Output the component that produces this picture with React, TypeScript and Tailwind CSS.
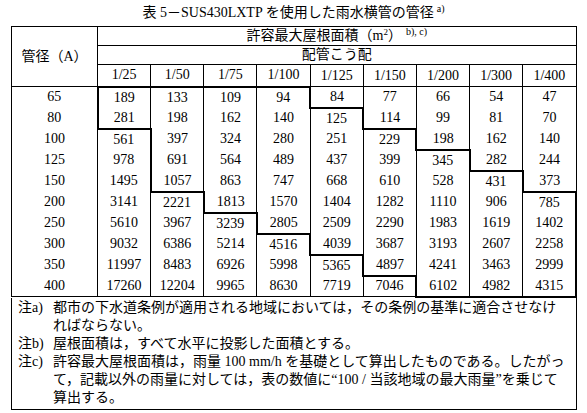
import React from "react";

const SLOPES = ["1/25", "1/50", "1/75", "1/100", "1/125", "1/150", "1/200", "1/300", "1/400"];

const ROWS: [number, number[]][] = [
  [65, [189, 133, 109, 94, 84, 77, 66, 54, 47]],
  [80, [281, 198, 162, 140, 125, 114, 99, 81, 70]],
  [100, [561, 397, 324, 280, 251, 229, 198, 162, 140]],
  [125, [978, 691, 564, 489, 437, 399, 345, 282, 244]],
  [150, [1495, 1057, 863, 747, 668, 610, 528, 431, 373]],
  [200, [3141, 2221, 1813, 1570, 1404, 1282, 1110, 906, 785]],
  [250, [5610, 3967, 3239, 2805, 2509, 2290, 1983, 1619, 1402]],
  [300, [9032, 6386, 5214, 4516, 4039, 3687, 3193, 2607, 2258]],
  [350, [11997, 8483, 6926, 5998, 5365, 4897, 4241, 3463, 2999]],
  [400, [17260, 12204, 9965, 8630, 7719, 7046, 6102, 4982, 4315]],
];

// columns enclosed by the thick stepped frame, per row
const BAND: [number, number][] = [
  [0, 3], [0, 4], [1, 5], [1, 6], [1, 7],
  [2, 8], [3, 8], [4, 8], [5, 8], [6, 8],
];

function inBand(r: number, c: number) {
  if (r < 0 || r >= BAND.length || c < 0 || c > 8) return false;
  return c >= BAND[r][0] && c <= BAND[r][1];
}

function cellClass(r: number, c: number) {
  const here = inBand(r, c);
  const top = here !== inBand(r - 1, c);
  const bottom = here !== inBand(r + 1, c);
  const left = here !== inBand(r, c - 1);
  const right = here !== inBand(r, c + 1);
  return [
    "border-black p-0 text-center",
    top ? "border-t-2" : "border-t-0",
    bottom ? "border-b-2" : r === ROWS.length - 1 ? "border-b" : "border-b-0",
    left ? "border-l-2" : "border-l",
    right ? "border-r-2" : "border-r",
  ].join(" ");
}

function Note({ label, lines }: { label: string; lines: string[] }) {
  return (
    <div className="flex">
      <span className="w-[35px] shrink-0">{label}</span>
      <div>
        {lines.map((l, i) => (
          <div key={i} className="whitespace-nowrap">
            {l}
          </div>
        ))}
      </div>
    </div>
  );
}

export default function App() {
  return (
    <div className="h-[413px] w-[587px] overflow-hidden bg-white font-[family-name:'Liberation_Serif','Noto_Sans_CJK_JP',serif] text-black">
      <div className="h-[26px] text-center text-[14px] leading-[26px]">
        表 5－SUS430LXTP を使用した雨水横管の管径
        <span className="relative -top-[5px] ml-[3px] text-[10px]">a)</span>
      </div>

      <table className="ml-[11px] w-[566px] table-fixed border-collapse">
        <colgroup>
          <col className="w-[86px]" />
          {SLOPES.map((s) => (
            <col key={s} />
          ))}
        </colgroup>
        <thead>
          <tr className="h-[19px]">
            <th rowSpan={3} className="border border-black p-0 text-[14px] font-normal">
              管径（A）
            </th>
            <th colSpan={9} className="border border-black p-0 text-[14px] font-normal leading-none">
              許容最大屋根面積（m<span className="relative -top-[5px] text-[9px]">2</span>）
              <span className="relative -top-[5px] ml-[4px] text-[10px]">b), c)</span>
            </th>
          </tr>
          <tr className="h-[19px]">
            <th colSpan={9} className="border border-black p-0 text-[14px] font-normal leading-none">
              配管こう配
            </th>
          </tr>
          <tr className="h-[22px]">
            {SLOPES.map((s) => (
              <th key={s} className="border border-black p-0 text-[14px] font-normal leading-none">
                {s}
              </th>
            ))}
          </tr>
        </thead>
        <tbody>
          {ROWS.map(([size, vals], r) => (
            <tr key={size} className="h-[21px] text-[14px] leading-none">
              <td
                className={`border-x border-black p-0 text-center ${
                  r === ROWS.length - 1 ? "border-b" : "border-b-0"
                }`}
              >
                {size}
              </td>
              {vals.map((v, c) => (
                <td key={c} className={cellClass(r, c)}>
                  {v}
                </td>
              ))}
            </tr>
          ))}
        </tbody>
      </table>

      <div className="ml-[11px] w-[566px] border-x border-b border-black pb-[2px] pl-[6px] pt-[1px] text-[14px] leading-[18px]">
        <Note label="注a)" lines={["都市の下水道条例が適用される地域においては，その条例の基準に適合させなけ", "ればならない。"]} />
        <Note label="注b)" lines={["屋根面積は，すべて水平に投影した面積とする。"]} />
        <Note
          label="注c)"
          lines={[
            "許容最大屋根面積は，雨量 100 mm/h を基礎として算出したものである。したがっ",
            "て，記載以外の雨量に対しては，表の数値に“100 / 当該地域の最大雨量”を乗じて",
            "算出する。",
          ]}
        />
      </div>
    </div>
  );
}
